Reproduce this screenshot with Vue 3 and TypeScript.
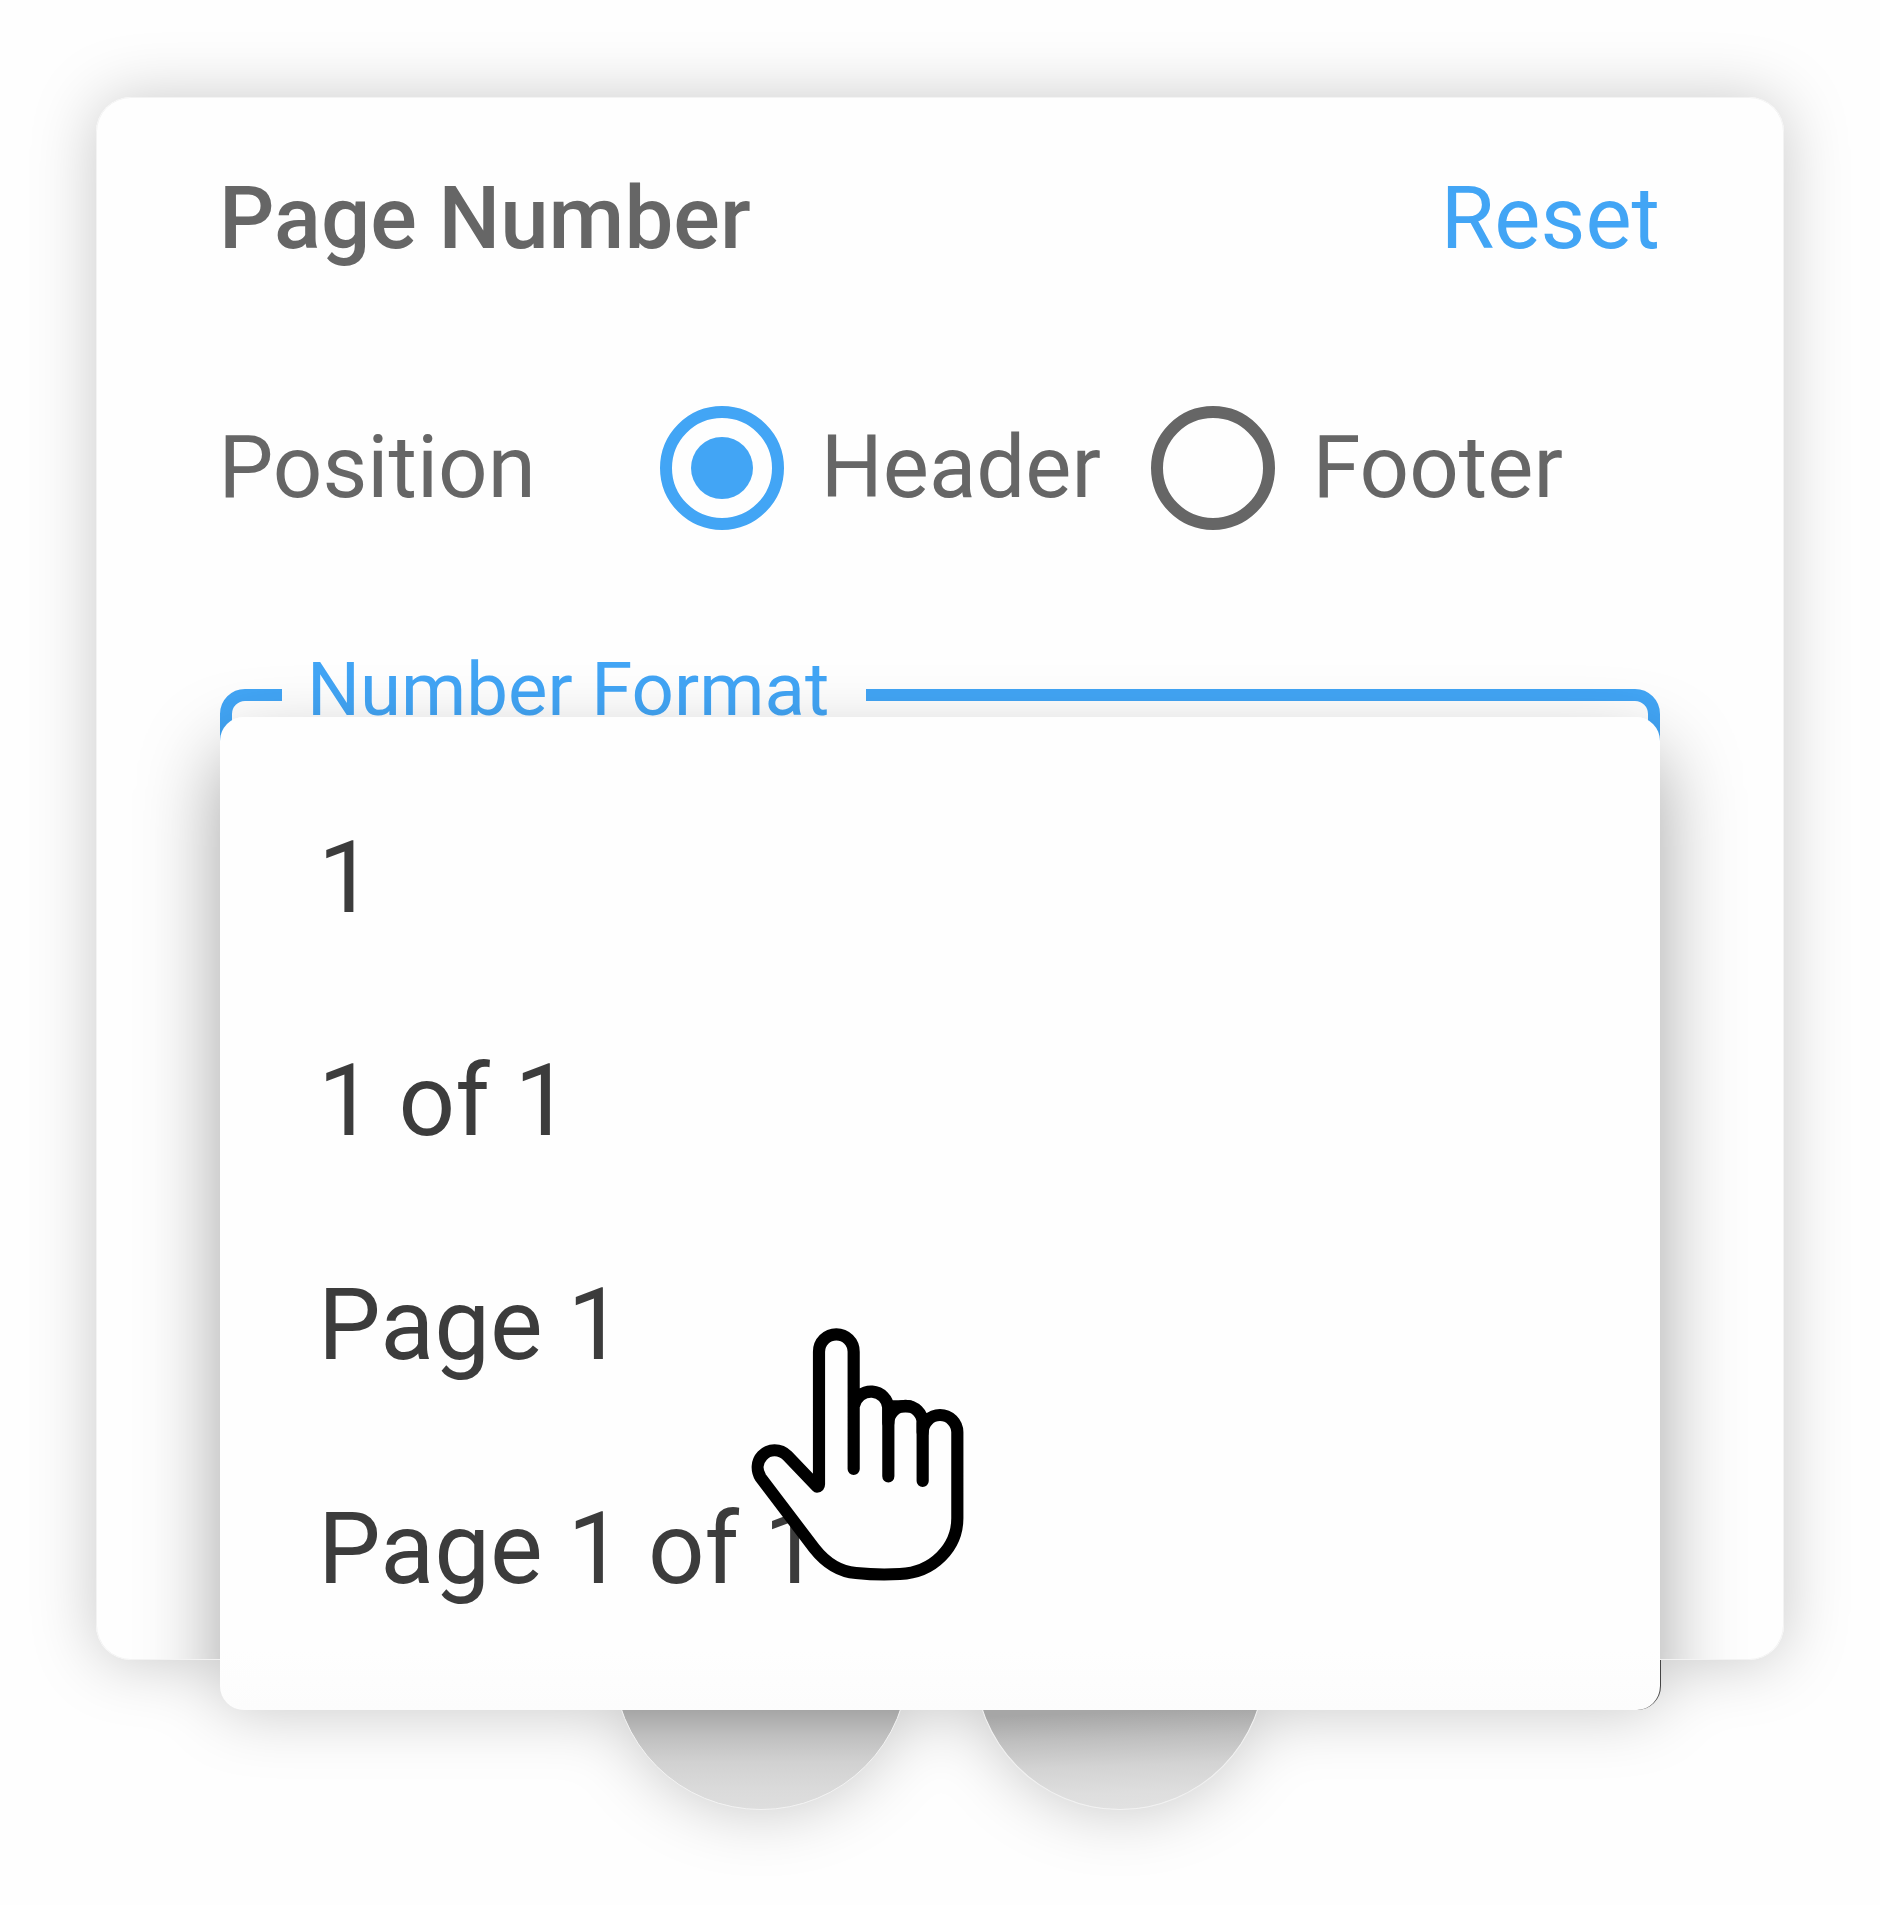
<script setup lang="ts">
import { ref } from 'vue'

const positions = ['Header', 'Footer']
const selected = ref('Header')
const formats = ['1', '1 of 1', 'Page 1', 'Page 1 of 1']
</script>

<template>
  <main class="page">
    <div class="stage">
      <i class="knob knob-left"></i>
      <i class="knob knob-right"></i>

      <section class="card">
        <header class="head">
          <h1>Page Number</h1>
          <a class="reset">Reset</a>
        </header>

        <div class="position">
          <span class="position-label">Position</span>
          <div
            v-for="p in positions"
            :key="p"
            class="option"
            @click="selected = p"
          >
            <span class="radio" :class="{ on: selected === p }"></span>
            <span class="option-text">{{ p }}</span>
          </div>
        </div>

        <fieldset class="field">
          <legend>Number Format</legend>
        </fieldset>
        <div class="menu-shadow"></div>
      </section>

      <ul class="menu">
        <li v-for="f in formats" :key="f">{{ f }}</li>
      </ul>

      <svg class="cursor" viewBox="0 0 840 900" width="280" height="300">
        <g stroke="#000" stroke-width="36.5" stroke-linecap="round" stroke-linejoin="round">
          <path
            fill="#fefefe"
            d="M401 507V155A52 52 0 0 0 297 155V553Q297 560 291 560L202 467C180 445 146 446 127 467C110 485 109 511 122 533L283 745C316 787 358 815 408 819Q475 826 540 822C640 818 712 742 712 655V397A52 52 0 0 0 608 397V369A51.5 51.5 0 0 0 505 369V324A52 52 0 0 0 402 317"
          />
          <path fill="none" d="M505 324V529M608 369V543M517 319H570" />
        </g>
      </svg>
    </div>
  </main>
</template>

<style>
body {
  margin: 0;
  background: #fefefe;
}
</style>

<style scoped>
.page {
  width: 1880px;
  height: 1905px;
  overflow: hidden;
  background: #fefefe;
  font-family: Roboto, "Liberation Sans", sans-serif;
}
.stage {
  position: relative;
  box-sizing: border-box;
  width: 1880px;
  height: 1905px;
  padding: 97px 96px 0;
  filter: drop-shadow(0 2px 32px rgba(0, 0, 0, 0.21));
}
.card {
  position: relative;
  box-sizing: border-box;
  height: 1563px;
  padding: 70px 124px 0;
  overflow: hidden;
  border-radius: 35px;
  background: #fefefe;
  color: #666;
}
/* hairline rim, drawn over the menu shadow */
.card::after {
  content: "";
  position: absolute;
  inset: 0;
  box-sizing: border-box;
  border: 1px solid #f3f3f3;
  border-radius: inherit;
  pointer-events: none;
}
.head {
  display: flex;
  justify-content: space-between;
  margin: 0 0 0 -1px;
  font-size: 87px;
  line-height: 102px;
}
h1 {
  margin: 0;
  font-size: inherit;
  font-weight: 500;
}
.reset {
  color: #42a5f5;
}
.position {
  display: flex;
  align-items: center;
  height: 124px;
  margin: 137px 0 0 -1.5px;
  font-size: 87px;
  line-height: 102px;
}
.position-label {
  width: 441px;
  margin-top: -2px;
}
.option {
  display: flex;
  align-items: center;
  margin-right: 50.3px;
}
.option-text {
  margin-top: -2px;
}
.radio {
  display: flex;
  align-items: center;
  justify-content: center;
  box-sizing: border-box;
  width: 124px;
  height: 124px;
  margin-right: 37.2px;
  border: 12.4px solid #666;
  border-radius: 50%;
}
.radio.on {
  border-color: #42a5f5;
}
.radio.on::after {
  content: "";
  width: 62px;
  height: 62px;
  border-radius: 50%;
  background: #42a5f5;
}
.field {
  box-sizing: border-box;
  min-width: 0;
  height: 240px;
  margin: 116px 0 0;
  padding: 0;
  border: 12px solid #42a5f5;
  border-radius: 25px;
}
.field legend {
  box-sizing: border-box;
  width: 584px;
  margin-left: 49.5px;
  padding: 0 0 10px 25.5px;
  color: #42a5f5;
  font-size: 74.4px;
  line-height: 87px;
  white-space: nowrap;
}
.menu-shadow {
  position: absolute;
  top: 620px;
  left: 124px;
  width: 1440px;
  height: 993px;
  border-radius: 24px;
  box-shadow: 0 36px 80px rgba(0, 0, 0, 0.36);
}
.menu {
  position: absolute;
  top: 717px;
  left: 220px;
  box-sizing: border-box;
  width: 1440px;
  height: 993px;
  margin: 0;
  padding: 49.7px 0 0 98px;
  border-radius: 24px;
  background: linear-gradient(#fefefe 94%, #fcfcfc);
  color: #3c3c3c;
  font-size: 99.4px;
  line-height: 223.67px;
  list-style: none;
}
/* thin dark edge where the menu hangs below the card */
.menu::after {
  content: "";
  position: absolute;
  right: -1px;
  bottom: 0;
  width: 60px;
  height: 50px;
  box-sizing: border-box;
  border-right: 1px solid #444;
  border-radius: 0 0 24px 0;
}
.knob {
  position: absolute;
  top: 1514px;
  box-sizing: border-box;
  width: 296px;
  height: 296px;
  border: 1px solid #f2f2f2;
  border-radius: 50%;
  background: linear-gradient(#a6a6a6 66.5%, #bfbfbf 75%, #d1d1d1 84%, #dadada 93%, #dedede);
}
.knob-left {
  left: 613px;
}
.knob-right {
  left: 974px;
  width: 292px;
  background: linear-gradient(178deg, #a6a6a6 66.5%, #bfbfbf 75%, #d3d3d3 84%, #dedede 93%, #e2e2e2);
}
.cursor {
  position: absolute;
  top: 1300px;
  left: 720px;
}
</style>
